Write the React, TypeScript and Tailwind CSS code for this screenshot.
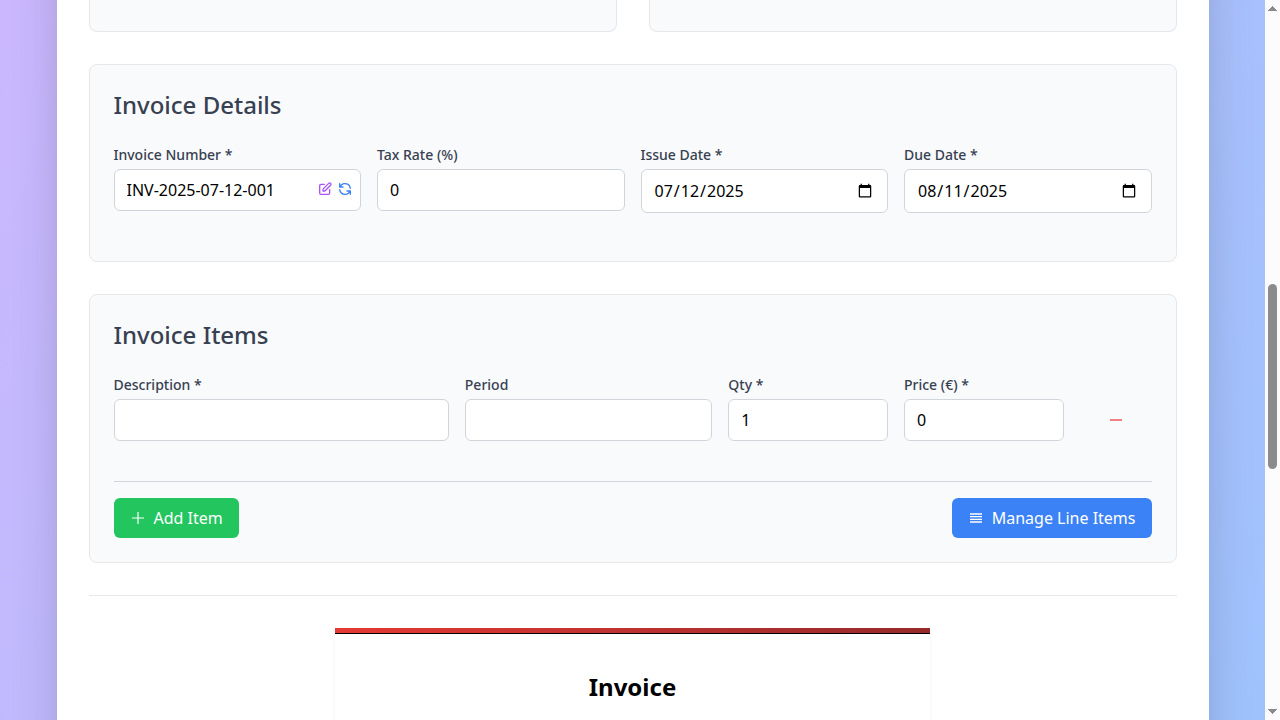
import type { ComponentProps, ReactNode } from "react";

const roundIcons = {
  edit: "M11 5H6a2 2 0 00-2 2v11a2 2 0 002 2h11a2 2 0 002-2v-5m-1.414-9.414a2 2 0 112.828 2.828L11.828 15H9v-2.828l8.586-8.586z",
  refresh:
    "M4 4v5h.582m15.356 2A8.001 8.001 0 004.582 9m0 0H9m11 11v-5h-.581m0 0a8.003 8.003 0 01-15.357-2m15.357 2H15",
};

const lineIcons = {
  plus: "M12 3v18M3 12h18",
  minus: "M3 12h18",
  lines: "M3 6h18M3 10h18M3 14h18M3 18h18",
};

function RoundIcon({ name }: { name: keyof typeof roundIcons }) {
  return (
    <svg className="size-4" fill="none" stroke="currentColor" viewBox="0 0 24 24" aria-hidden="true">
      <path strokeLinecap="round" strokeLinejoin="round" strokeWidth={2} d={roundIcons[name]} />
    </svg>
  );
}

function LineIcon({ name }: { name: keyof typeof lineIcons }) {
  return (
    <svg className="size-4" fill="none" stroke="currentColor" viewBox="0 0 24 24" aria-hidden="true">
      <path strokeWidth={name === "plus" ? 1.75 : 2} d={lineIcons[name]} />
    </svg>
  );
}

interface FieldProps extends ComponentProps<"input"> {
  id: string;
  label: string;
  wrapperClass?: string;
  heightClass?: string;
  children?: ReactNode;
}

function Field({ id, label, wrapperClass = "", heightClass = "h-[42px]", children, ...input }: FieldProps) {
  return (
    <div className={wrapperClass}>
      <label htmlFor={id} className="mb-1 block text-sm font-medium text-[#374151]">
        {label}
      </label>
      <div className="relative">
        <input
          id={id}
          className={`block w-full rounded-md border border-[#d1d5db] bg-white px-3 py-2 text-base text-black ${heightClass}`}
          {...input}
        />
        {children}
      </div>
    </div>
  );
}

function Section({ title, children }: { title: string; children: ReactNode }) {
  return (
    <section className="mb-8 rounded-lg border border-[#e5e7eb] bg-[#f9fafb] p-6">
      <h2 className="mb-6 text-2xl font-medium text-[#374151]">{title}</h2>
      {children}
    </section>
  );
}

function ScrollTrack() {
  return (
    <div className="flex w-[15px] shrink-0 flex-col items-center bg-[#fcfcfc] py-1.5" aria-hidden="true">
      <svg width="9" height="5" viewBox="0 0 9 5" fill="#8b8b8b" shapeRendering="crispEdges">
        <path d="M4 0h1v1h1v1h1v1h1v1h1v1H0V4h1V3h1V2h1V1h1z" />
      </svg>
      <div className="grow-[273]" />
      <div className="w-[9px] grow-[185] rounded-full bg-[#8b8b8b]" />
      <div className="grow-[240]" />
      <svg width="9" height="5" viewBox="0 0 9 5" fill="#8b8b8b" shapeRendering="crispEdges">
        <path d="M0 0h9v1H8v1H7v1H6v1H5v1H4V4H3V3H2V2H1V1H0z" />
      </svg>
    </div>
  );
}

export default function App() {
  return (
    <div className="flex h-screen overflow-hidden font-['Noto_Sans',sans-serif]">
      <div className="min-w-0 flex-1 overflow-hidden bg-[linear-gradient(to_bottom_right,#d8b4fe,#93c5fd)] bg-[length:100%_2677px] bg-[position:0_-1043px]">
        <main className="mx-auto -mt-24 min-h-[calc(100%+192px)] max-w-6xl bg-white px-8 pt-24 shadow-2xl">
          <div className="mb-8 grid grid-cols-2 gap-8">
            <div className="h-8 rounded-b-lg border border-t-0 border-[#e5e7eb] bg-[#f9fafb]" />
            <div className="h-8 rounded-b-lg border border-t-0 border-[#e5e7eb] bg-[#f9fafb]" />
          </div>

          <Section title="Invoice Details">
            <div className="mb-6 grid grid-cols-4 gap-4">
              <Field id="number" label="Invoice Number *" defaultValue="INV-2025-07-12-001">
                <div className="absolute inset-y-0 right-2 flex items-center gap-1 pb-0.5">
                  <button type="button" aria-label="Edit invoice number" className="text-[#a855f7]">
                    <RoundIcon name="edit" />
                  </button>
                  <button type="button" aria-label="Regenerate invoice number" className="text-[#3b82f6]">
                    <RoundIcon name="refresh" />
                  </button>
                </div>
              </Field>
              <Field id="tax" label="Tax Rate (%)" type="number" defaultValue="0" />
              <Field id="issued" label="Issue Date *" type="date" defaultValue="2025-07-12" heightClass="h-11" />
              <Field id="due" label="Due Date *" type="date" defaultValue="2025-08-11" heightClass="h-11" />
            </div>
          </Section>

          <Section title="Invoice Items">
            <div className="mb-4 grid grid-cols-12 gap-4">
              <Field id="description" label="Description *" wrapperClass="col-span-4" />
              <Field id="period" label="Period" wrapperClass="col-span-3" />
              <Field id="qty" label="Qty *" type="number" defaultValue="1" wrapperClass="col-span-2" />
              <Field id="price" label="Price (€) *" type="number" defaultValue="0" wrapperClass="col-span-2" />
              <div className="flex items-end justify-center">
                <button type="button" aria-label="Remove item" className="flex h-[42px] items-center px-2 text-[#ef4444]">
                  <LineIcon name="minus" />
                </button>
              </div>
            </div>
            <div className="mt-10 flex justify-between border-t border-[#d1d5db] pt-4">
              <button type="button" className="flex items-center gap-2 rounded-md bg-[#22c55e] px-4 py-2 text-white">
                <LineIcon name="plus" />
                Add Item
              </button>
              <button type="button" className="flex items-center gap-2 rounded-md bg-[#3b82f6] px-4 py-2 text-white">
                <LineIcon name="lines" />
                Manage Line Items
              </button>
            </div>
          </Section>

          <hr className="mb-8 border-[#e5e7eb]" />

          <article className="mx-auto h-[842px] max-w-[595px] bg-white shadow-[0_2px_4px_rgba(0,0,0,0.06)]">
            <div className="h-1.5 border-b border-black bg-[linear-gradient(to_right,#e53935,#962a2a)]" />
            <h2 className="pt-[37px] text-center text-2xl font-bold text-black">Invoice</h2>
          </article>
        </main>
      </div>
      <ScrollTrack />
    </div>
  );
}
